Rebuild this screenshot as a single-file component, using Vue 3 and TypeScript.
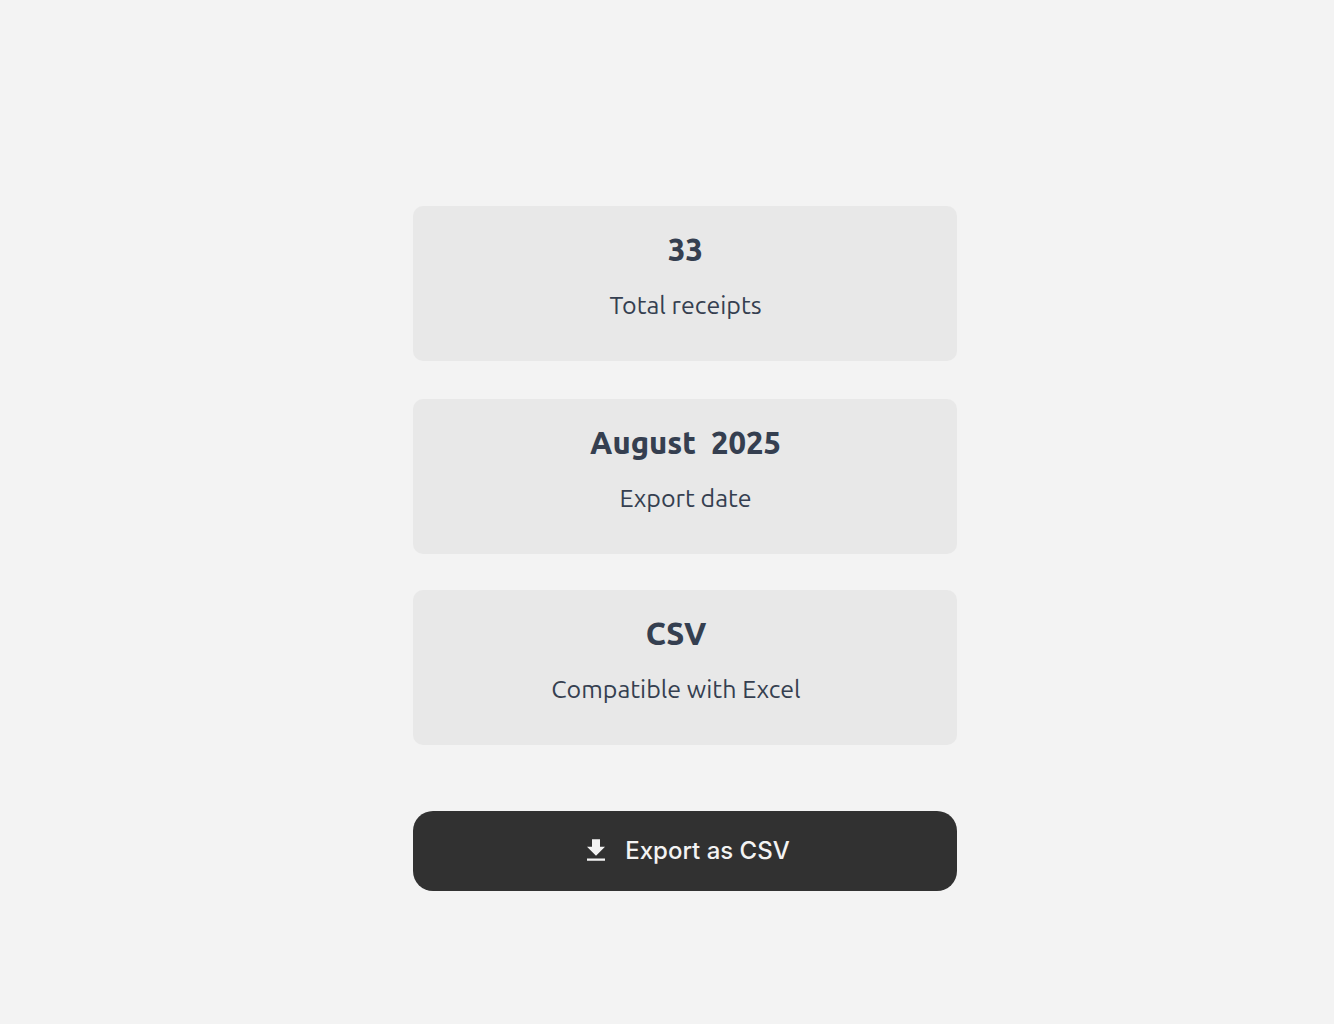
<script setup lang="ts">
interface Stat {
  id: string
  value: string
  label: string
}

const stats: Stat[] = [
  { id: 'receipts', value: '33', label: 'Total receipts' },
  { id: 'date', value: 'August\u00a0 2025', label: 'Export date' },
  { id: 'format', value: 'CSV', label: 'Compatible with Excel' },
]
</script>

<template>
  <main class="page">
    <section class="panel">
      <article v-for="stat in stats" :key="stat.id" class="card" :class="stat.id">
        <h2 class="value">{{ stat.value }}</h2>
        <p class="label">{{ stat.label }}</p>
      </article>
      <button class="export" type="button">
        <svg class="icon" viewBox="0 0 20 24" aria-hidden="true">
          <path d="M6 0.3h8v7.5h5L10 16.8 1 7.8h5zM1 19.5h18v2.3H1z" fill="currentColor" />
        </svg>
        <span>Export as CSV</span>
      </button>
    </section>
  </main>
</template>

<style>
body {
  background: #f3f3f3;
}
</style>

<style scoped>
.page {
  box-sizing: border-box;
  min-height: 100vh;
  padding: 206px 16px 64px 52px;
  display: flex;
  justify-content: center;
  align-items: flex-start;
  font-family: Ubuntu, "Noto Sans", sans-serif;
  color: #353f50;
}
.panel {
  width: 100%;
  max-width: 544px;
  display: flex;
  flex-direction: column;
}
.card {
  padding: 24px 15px 40px 16px;
  margin-bottom: 38px;
  border-radius: 10px;
  background: #e8e8e8;
  text-align: center;
}
.card.date {
  margin-bottom: 36px;
}
.card.format {
  margin-bottom: 66px;
  padding-right: 34px;
}
.value {
  margin: 0 0 20px;
  font-size: 31px;
  line-height: 40px;
  font-weight: 800;
}
.label {
  margin: 0;
  font-size: 25px;
  line-height: 31px;
  font-weight: 400;
}
.export {
  height: 80px;
  border: 0;
  border-radius: 20px;
  padding: 0 0 0 6px;
  background: #313131;
  color: #f3f3f3;
  display: flex;
  align-items: center;
  justify-content: center;
  gap: 19px;
  font: 500 24px/32px Inter, "Liberation Sans", sans-serif;
}
.icon {
  width: 20px;
  height: 24px;
}
</style>
